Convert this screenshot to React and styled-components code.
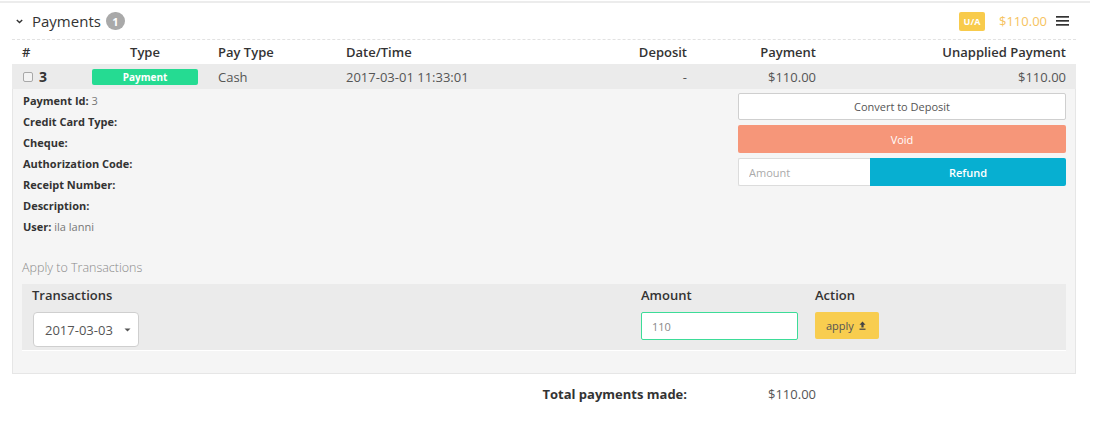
import React from 'react';
import styled, { createGlobalStyle, css } from 'styled-components';

const Global = createGlobalStyle`
  html, body { margin: 0; padding: 0; background: #fff; }
  body { font-family: "Open Sans", "Liberation Sans", sans-serif; color: #333; }
  * { box-sizing: border-box; }
`;

const cols = css`
  display: grid;
  grid-template-columns: 70px 126px 128px 1fr 127px 129px 250px;
`;

const Page = styled.div`
  width: 1090px;
  margin-top: 1px;
  border-top: 2px solid #ececec;
`;

const Section = styled.section`
  margin-left: 12px;
  width: 1064px;
`;

const Header = styled.div`
  display: flex;
  align-items: center;
  height: 37px;
  padding: 0 7px 0 4px;
  border-bottom: 1px dashed #e2e2e2;
`;

const Title = styled.h2`
  margin: 0 0 0 9px;
  font-size: 15px;
  font-weight: 400;
  color: #333;
  display: flex;
  align-items: center;
`;

const CountBadge = styled.span`
  display: inline-flex;
  align-items: center;
  justify-content: center;
  width: 19px;
  height: 18px;
  margin-left: 5px;
  border-radius: 9px;
  background: #a9a9a9;
  color: #fff;
  font-size: 11px;
  font-weight: 700;
`;

const Spacer = styled.div`
  flex: 1;
`;

const UABadge = styled.span`
  display: inline-flex;
  align-items: center;
  justify-content: center;
  width: 26px;
  height: 19px;
  border-radius: 2px;
  background: #f8cb4c;
  color: #fff;
  font-size: 9px;
  font-weight: 700;
`;

const Unapplied = styled.span`
  margin-left: 14px;
  font-size: 13px;
  color: #f6c35e;
`;

const Menu = styled.svg`
  margin-left: 9px;
`;

const HeadRow = styled.div`
  ${cols};
  height: 24px;
  align-items: center;
  font-size: 13px;
  font-weight: 600;
  color: #333;
`;

const DataRow = styled.div`
  ${cols};
  height: 25px;
  align-items: center;
  background: #ebebeb;
  font-size: 13px;
  color: #555;
`;

const Cell = styled.div`
  padding: 0 10px;
  text-align: ${(p) => p.$align || 'left'};
  white-space: nowrap;
  display: flex;
  align-items: center;
  justify-content: ${(p) =>
    p.$align === 'right' ? 'flex-end' : p.$align === 'center' ? 'center' : 'flex-start'};
`;

const Check = styled.span`
  width: 10px;
  height: 10px;
  margin-left: 1px;
  border: 1px solid #a8a8a8;
  border-radius: 2px;
  background: #f3f3f3;
`;

const RowNum = styled.span`
  margin-left: 6px;
  font-size: 14px;
  font-weight: 700;
  color: #333;
`;

const TypeBadge = styled.span`
  display: inline-flex;
  align-items: center;
  justify-content: center;
  width: 107px;
  height: 16px;
  border-radius: 2px;
  background: #25db92;
  color: #fff;
  font-size: 10px;
  font-weight: 700;
`;

const Panel = styled.div`
  background: #f5f5f5;
  border: 1px solid #e6e6e6;
  border-top: none;
  padding: 0 9px 22px;
`;

const DetailGrid = styled.div`
  display: grid;
  grid-template-columns: 1fr 328px;
  padding-top: 1px;
`;

const InfoList = styled.div`
  padding-left: 1px;
`;

const InfoLine = styled.div`
  font-size: 11px;
  line-height: 21px;
  color: #777;
`;

const Label = styled.span`
  font-weight: 700;
  color: #333;
`;

const Actions = styled.div`
  display: flex;
  flex-direction: column;
  gap: 5px;
  padding-top: 3px;
`;

const Btn = styled.button`
  height: ${(p) => p.$h || 27}px;
  border: 1px solid ${(p) => p.$border || 'transparent'};
  border-radius: 2px;
  background: ${(p) => p.$bg || '#fff'};
  color: ${(p) => p.$color || '#555'};
  font-family: inherit;
  font-size: 11px;
  padding: 0;
  width: 100%;
`;

const InputGroup = styled.div`
  display: grid;
  grid-template-columns: 132px 1fr;
  height: 28px;
`;

const GroupInput = styled.input`
  border: 1px solid #dcdcdc;
  border-right: none;
  border-radius: 2px 0 0 2px;
  background: #fff;
  padding: 0 10px;
  font-family: inherit;
  font-size: 11px;
  color: #555;
  &::placeholder { color: #aaa; }
`;

const RefundBtn = styled.button`
  border: none;
  border-radius: 0 2px 2px 0;
  background: #07afd1;
  color: #fff;
  font-family: inherit;
  font-size: 11px;
  font-weight: 600;
`;

const ApplyHeading = styled.div`
  margin-top: 22px;
  font-size: 12.5px;
  font-weight: 300;
  line-height: 18px;
  color: #8a8a8a;
`;

const TxBox = styled.div`
  margin-top: 7px;
  background: #ebebeb;
  border-bottom: 1px solid #fff;
`;

const TxGrid = styled.div`
  display: grid;
  grid-template-columns: 1fr 174px 261px;
  align-items: ${(p) => p.$align || 'center'};
  height: ${(p) => p.$h}px;
  padding-top: ${(p) => p.$pt || 0}px;
`;

const TxHead = styled.div`
  padding: 0 10px;
  font-size: 13px;
  font-weight: 600;
  color: #333;
`;

const TxCell = styled.div`
  padding: 0 ${(p) => p.$pr || 0}px 0 ${(p) => p.$pl || 10}px;
`;

const Select = styled.div`
  display: inline-flex;
  align-items: center;
  width: 106px;
  height: 35px;
  padding: 0 0 0 11px;
  border: 1px solid #cfcfcf;
  border-radius: 4px;
  background: #fff;
  font-size: 13px;
  color: #555;
  gap: 11px;
`;

const AmountInput = styled.input`
  width: 157px;
  height: 28px;
  border: 1px solid #3ddc98;
  border-radius: 2px;
  background: #fff;
  padding: 0 10px;
  font-family: inherit;
  font-size: 11px;
  color: #888;
`;

const ApplyBtn = styled.button`
  display: inline-flex;
  align-items: center;
  gap: 5px;
  width: 64px;
  height: 27px;
  padding: 0 0 0 11px;
  border: none;
  border-radius: 2px;
  background: #f8cd4f;
  color: #555;
  font-family: inherit;
  font-size: 11px;
`;

const TotalRow = styled.div`
  ${cols};
  height: 40px;
  align-items: center;
  font-size: 13px;
  color: #555;
`;

const TotalLabel = styled(Cell)`
  grid-column: 1 / 6;
  font-weight: 700;
  color: #333;
`;

const Chevron = () => (
  <svg width="7" height="5" viewBox="0 0 7 5">
    <path d="M0.8 1 L3.5 3.6 L6.2 1" fill="none" stroke="#333" strokeWidth="1.4" />
  </svg>
);

const Caret = () => (
  <svg width="7" height="4" viewBox="0 0 7 4">
    <path d="M0.5 0.5 H6.5 L3.5 3.5 Z" fill="#555" />
  </svg>
);

const Upload = () => (
  <svg width="7" height="9" viewBox="0 0 7 9">
    <path d="M3.5 0.5 L6.5 3.8 H4.6 V6.5 H2.4 V3.8 H0.5 Z" fill="#444" />
    <rect x="0.5" y="7.6" width="6" height="1.2" fill="#444" />
  </svg>
);

export default function App() {
  return (
    <>
      <Global />
      <Page>
        <Section>
          <Header>
            <Chevron />
            <Title>
              Payments<CountBadge>1</CountBadge>
            </Title>
            <Spacer />
            <UABadge>U/A</UABadge>
            <Unapplied>$110.00</Unapplied>
            <Menu width="13" height="10" viewBox="0 0 13 10">
              <rect x="0" y="0" width="13" height="1.7" fill="#333" />
              <rect x="0" y="4" width="13" height="1.7" fill="#333" />
              <rect x="0" y="8" width="13" height="1.7" fill="#333" />
            </Menu>
          </Header>

          <HeadRow>
            <Cell>#</Cell>
            <Cell $align="center">Type</Cell>
            <Cell>Pay Type</Cell>
            <Cell>Date/Time</Cell>
            <Cell $align="right">Deposit</Cell>
            <Cell $align="right">Payment</Cell>
            <Cell $align="right">Unapplied Payment</Cell>
          </HeadRow>

          <DataRow>
            <Cell>
              <Check />
              <RowNum>3</RowNum>
            </Cell>
            <Cell $align="center">
              <TypeBadge>Payment</TypeBadge>
            </Cell>
            <Cell>Cash</Cell>
            <Cell>2017-03-01 11:33:01</Cell>
            <Cell $align="right">-</Cell>
            <Cell $align="right">$110.00</Cell>
            <Cell $align="right">$110.00</Cell>
          </DataRow>

          <Panel>
            <DetailGrid>
              <InfoList>
                <InfoLine><Label>Payment Id:</Label> 3</InfoLine>
                <InfoLine><Label>Credit Card Type:</Label></InfoLine>
                <InfoLine><Label>Cheque:</Label></InfoLine>
                <InfoLine><Label>Authorization Code:</Label></InfoLine>
                <InfoLine><Label>Receipt Number:</Label></InfoLine>
                <InfoLine><Label>Description:</Label></InfoLine>
                <InfoLine><Label>User:</Label> ila lanni</InfoLine>
              </InfoList>
              <Actions>
                <Btn $border="#cfcfcf">Convert to Deposit</Btn>
                <Btn $h={28} $bg="#f69679" $color="#fff">Void</Btn>
                <InputGroup>
                  <GroupInput placeholder="Amount" />
                  <RefundBtn>Refund</RefundBtn>
                </InputGroup>
              </Actions>
            </DetailGrid>

            <ApplyHeading>Apply to Transactions</ApplyHeading>

            <TxBox>
              <TxGrid $h={22}>
                <TxHead>Transactions</TxHead>
                <TxHead>Amount</TxHead>
                <TxHead>Action</TxHead>
              </TxGrid>
              <TxGrid $h={44} $pt={6} $align="start">
                <TxCell $pl={11}>
                  <Select>
                    2017-03-03
                    <Caret />
                  </Select>
                </TxCell>
                <TxCell>
                  <AmountInput defaultValue="110" />
                </TxCell>
                <TxCell>
                  <ApplyBtn>
                    apply <Upload />
                  </ApplyBtn>
                </TxCell>
              </TxGrid>
            </TxBox>
          </Panel>

          <TotalRow>
            <TotalLabel $align="right">Total payments made:</TotalLabel>
            <Cell $align="right">$110.00</Cell>
          </TotalRow>
        </Section>
      </Page>
    </>
  );
}
